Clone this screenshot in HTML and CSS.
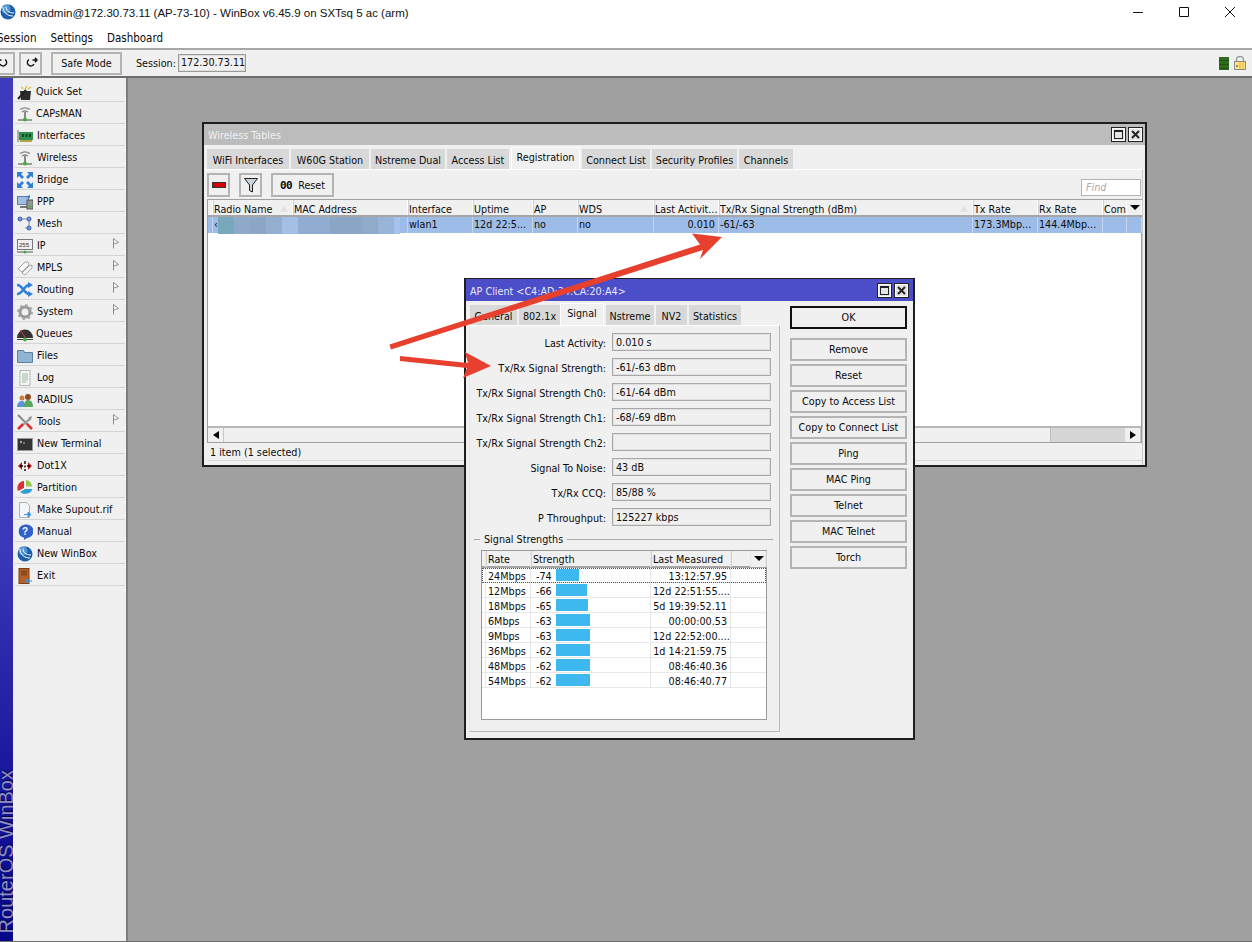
FILE: index.html
```html
<!DOCTYPE html>
<html lang="en">
<head>
<meta charset="utf-8">
<title>WinBox</title>
<link rel="stylesheet" href="styles.css">
</head>
<body>
<svg class="defs" width="0" height="0" aria-hidden="true">
  <defs>
    <symbol id="globe" viewBox="0 0 16 16"><circle cx="8" cy="8" r="7.5" fill="#1d5fa8"/><circle cx="6" cy="5" r="4.5" fill="#4f94d6"/><path d="M3 3c0 5 4 9 10 9M6 2.500c0 4 3 6.500 8 6.500" fill="none" stroke="#fff" stroke-width="1"/></symbol>
    <symbol id="antenna" viewBox="0 0 16 16"><path d="M3 3.500c3-2 7-2 10 0M5 6c2-1.300 4-1.300 6 0" fill="none" stroke="#8a8a8a" stroke-width="1.300"/><path d="M8 6v7" stroke="#666" stroke-width="1.500"/><path d="M1 14h14" stroke="#444" stroke-width="1"/><circle cx="8" cy="13.500" r="2" fill="#3fae3f"/></symbol>
    <symbol id="sub" viewBox="0 0 6 11"><path d="M.5 .5v10M.5 .5l5 4-5 1.500" fill="#fff" stroke="#8c8c8c" stroke-width="1"/></symbol>
    <symbol id="xmark" viewBox="0 0 9 9"><path d="M1 1l7 7M8 1l-7 7" stroke="#222" stroke-width="2"/></symbol>
  </defs>
</svg>

<header class="titlebar">
  <svg class="app-icon"><use href="#globe"/></svg>
  <span class="title-text">msvadmin@172.30.73.11 (AP-73-10) - WinBox v6.45.9 on SXTsq 5 ac (arm)</span>
  <div class="win-controls">
    <svg class="wc" viewBox="0 0 46 20"><path d="M18 10.500h10" stroke="#111"/></svg>
    <svg class="wc" viewBox="0 0 46 20"><path d="M18.500 5.500h9v9h-9z" fill="none" stroke="#111"/></svg>
    <svg class="wc" viewBox="0 0 46 20"><path d="M18 5l10 10M28 5l-10 10" stroke="#111"/></svg>
  </div>
</header>

<nav class="menubar">
  <span class="mb-session">Session</span><span class="mb-settings">Settings</span><span>Dashboard</span>
</nav>

<div class="toolbar">
  <button class="tb-btn tb-undo"><svg viewBox="0 0 14 12" width="14" height="12"><path d="M9 2.500a3.500 3.500 0 1 1-5 4.500M1.500 3h4M3 .8L1 3l2 2.200" fill="none" stroke="#111" stroke-width="1.400"/></svg></button>
  <button class="tb-btn tb-redo"><svg viewBox="0 0 14 12" width="14" height="12"><path d="M5 2.500a3.500 3.500 0 1 0 5 4.500M8.500 3h4M11 .8L13 3l-2 2.200" fill="none" stroke="#111" stroke-width="1.400"/></svg></button>
  <button class="tb-btn tb-safe">Safe Mode</button>
  <span class="tb-label">Session:</span>
  <span class="tb-session">172.30.73.11</span>
  <span class="tb-space"></span>
  <span class="tb-green"></span>
  <svg class="tb-lock" viewBox="0 0 12 14"><path d="M2.500 6V3.500a3.500 3 0 0 1 7 0V6" fill="none" stroke="#999" stroke-width="1.300"/><rect x=".5" y="5.500" width="11" height="8" fill="#ffe680" stroke="#8a8a8a"/><path d="M6 6v7M9 6v7" stroke="#f2b84a" stroke-width="1.500"/><path d="M3 9v2" stroke="#333"/></svg>
</div>

<main class="main">
  <aside class="sidebar">
    <div class="brand"><span class="brand-text">RouterOS WinBox</span></div>
    <ul class="menu">
      <li><svg class="mi" viewBox="0 0 16 16"><path d="M3 7h11l-1 9H4z" fill="#2b2b2b"/><path d="M1 15L9 6" stroke="#222" stroke-width="2"/><path d="M8 5l2-3M11 5l3-2M5 3l1 2" stroke="#d9b93a" stroke-width="1.300"/></svg><span class="tight">Quick Set</span></li>
      <li><svg class="mi"><use href="#antenna"/></svg><span class="tight">CAPsMAN</span></li>
      <li><svg class="mi" viewBox="0 0 16 16"><path d="M1 2v12" stroke="#999" stroke-width="1.500"/><rect x="2" y="4" width="14" height="8" fill="#2f8f4f"/><path d="M3 12v2h12v-2" fill="#b5a24a"/><path d="M5 6h2v3H5zM8.500 6h2v3h-2zM12 6h2v3h-2z" fill="#0d4a22"/></svg><span>Interfaces</span></li>
      <li><svg class="mi"><use href="#antenna"/></svg><span>Wireless</span></li>
      <li><svg class="mi" viewBox="0 0 16 16"><g fill="#2f7fd6"><path d="M0 0h6l-2 2 3 3-2 2-3-3-2 2z"/><path d="M16 0v6l-2-2-3 3-2-2 3-3-2-2z"/><path d="M0 16v-6l2 2 3-3 2 2-3 3 2 2z"/><path d="M16 16h-6l2-2-3-3 2-2 3 3 2-2z"/></g></svg><span>Bridge</span></li>
      <li><svg class="mi" viewBox="0 0 16 16"><rect x=".5" y="2.500" width="11" height="8" fill="#9fc0e6" stroke="#6b7f96"/><path d="M3 13h7" stroke="#777" stroke-width="2"/><rect x="10" y="6" width="6" height="9" fill="#8d9a8d" stroke="#555"/><circle cx="13" cy="12.500" r="1" fill="#3fae3f"/><path d="M8 3l5-2v3z" fill="#2f7fd6"/></svg><span>PPP</span></li>
      <li><svg class="mi" viewBox="0 0 16 16"><path d="M3 3h6M12 3v9M9 3h3M8 12h4" stroke="#7d8794"/><g fill="#6f97e6" stroke="#3b5cb0"><circle cx="3" cy="3" r="2"/><circle cx="12" cy="3" r="2"/><circle cx="12" cy="12" r="2"/></g></svg><span>Mesh</span></li>
      <li class="has-sub"><svg class="mi" viewBox="0 0 16 16"><rect x=".5" y="1.500" width="15" height="10" fill="#eee" stroke="#777"/><text class="mi-255" x="2" y="9">255</text><path d="M0 14h16" stroke="#555"/><circle cx="8" cy="14" r="1.500" fill="#3fae3f"/></svg><span>IP</span><svg class="sub"><use href="#sub"/></svg></li>
      <li class="has-sub"><svg class="mi" viewBox="0 0 16 16"><path d="M1 9l7-7h3l1 3-7 7zM5 13l7-7 3-1v3l-7 7z" fill="#f7f7f7" stroke="#a5a5a5"/></svg><span>MPLS</span><svg class="sub"><use href="#sub"/></svg></li>
      <li class="has-sub"><svg class="mi" viewBox="0 0 16 16"><path d="M0 3c6 0 7 9 12 9M0 12c6 0 7-9 12-9" fill="none" stroke="#2f7fd6" stroke-width="2.500"/><path d="M11 0l5 3-5 3zM11 9l5 3-5 3z" fill="#2f7fd6"/></svg><span>Routing</span><svg class="sub"><use href="#sub"/></svg></li>
      <li class="has-sub"><svg class="mi" viewBox="0 0 16 16"><circle cx="8" cy="8" r="5" fill="none" stroke="#999" stroke-width="3"/><circle cx="8" cy="8" r="7" fill="none" stroke="#aaa" stroke-width="2" stroke-dasharray="2.500 3"/></svg><span>System</span><svg class="sub"><use href="#sub"/></svg></li>
      <li><svg class="mi" viewBox="0 0 16 16"><path d="M0 12a8 8.500 0 1 1 16 0z" fill="#333"/><path d="M3 4l6 8" stroke="#e33" stroke-width="1"/><path d="M0 13.500h16" stroke="#444"/><circle cx="8" cy="13.500" r="2" fill="#3fae3f"/></svg><span class="tight">Queues</span></li>
      <li><svg class="mi" viewBox="0 0 16 16"><path d="M.5 2.500h6l1 2h8v10H.5z" fill="#8fb4d4" stroke="#5f8199"/></svg><span>Files</span></li>
      <li><svg class="mi" viewBox="0 0 16 16"><path d="M3 .5h10v15H3z" fill="#f4f4f0" stroke="#aaa" stroke-dasharray="2 .5"/><path d="M5 4h6M5 6h6M5 8h6M5 10h6M5 12h4" stroke="#9bbfa5"/></svg><span>Log</span></li>
      <li><svg class="mi" viewBox="0 0 16 16"><circle cx="5" cy="6" r="2.500" fill="#c9803a"/><circle cx="11" cy="5" r="3" fill="#8c4a26"/><path d="M0 15c0-5 3-6 5-6s3 1 3 6z" fill="#5c93d6"/><path d="M7 15c0-6 2-7 4-7s5 1 5 7z" fill="#58a85e"/></svg><span>RADIUS</span></li>
      <li class="has-sub"><svg class="mi" viewBox="0 0 16 16"><path d="M1 1l13 13" stroke="#888" stroke-width="2"/><path d="M15 2l-3 1-1 2L2 13l1 2 9-8 2-1z" fill="#999"/><path d="M1 15l5-5M10 10l5 5" stroke="#d33" stroke-width="2.500"/></svg><span>Tools</span><svg class="sub"><use href="#sub"/></svg></li>
      <li><svg class="mi" viewBox="0 0 16 16"><rect x=".5" y="2.500" width="15" height="12" fill="#333" stroke="#999"/><path d="M3 5l2 1-2 1M6 7h2" stroke="#ddd" stroke-width=".8" fill="none"/></svg><span>New Terminal</span></li>
      <li><svg class="mi" viewBox="0 0 16 16"><path d="M1 8l4-4v8zM15 8l-4-4v8z" fill="#c81e1e"/><path d="M3 8h3M10 8h3" stroke="#000" stroke-width="1.500"/><path d="M8 3v3M8 7.500v2M8 11v2" stroke="#111" stroke-width="1.500"/></svg><span>Dot1X</span></li>
      <li><svg class="mi" viewBox="0 0 16 16"><path d="M7 1a7 7 0 0 0-6 10l6-3z" fill="#d6323a"/><path d="M9 0a7 7 0 0 1 6 6.500H9z" fill="#9ac94a"/><path d="M3 12l5-3h7.500a7.500 6.500 0 0 1-12.500 3z" fill="#2f9fd0"/></svg><span>Partition</span></li>
      <li><svg class="mi" viewBox="0 0 16 16"><path d="M2.500 .5h7l3 3V15.500h-10z" fill="#f2f7fb" stroke="#a8b4bd"/><path d="M7 12.500h6M11 10l3 2.500-3 2.500z" fill="#3b8fe0" stroke="#3b8fe0"/></svg><span>Make Supout.rif</span></li>
      <li><svg class="mi" viewBox="0 0 16 16"><path d="M8 .5a7.500 6.800 0 0 1 2 13.500l-3 2v-2.300A7.500 6.800 0 0 1 8 .5z" fill="#3060c8"/><text class="mi-q" x="5" y="11">?</text></svg><span>Manual</span></li>
      <li><svg class="mi"><use href="#globe"/></svg><span>New WinBox</span></li>
      <li><svg class="mi" viewBox="0 0 16 16"><rect x="2" y=".5" width="10" height="15" fill="#b5612a" stroke="#7a4018"/><rect x="4" y="2.500" width="6" height="5" fill="#8f4a1c"/><path d="M8 13h7M11 11l-3 2 3 2z" stroke="#3b8fe0" fill="#3b8fe0"/></svg><span>Exit</span></li>
    </ul>
  </aside>

  <section class="desktop">
    <div class="win win-tables">
      <div class="win-title win-title-idle">
        <span class="win-name">Wireless Tables</span>
        <span class="tbtns"><span class="tbtn"><i class="ico-max"></i></span><span class="tbtn"><svg class="ico-x"><use href="#xmark"/></svg></span></span>
      </div>
      <div class="tabs tabs-w">
        <span class="tab">WiFi Interfaces</span><span class="tab">W60G Station</span><span class="tab">Nstreme Dual</span><span class="tab">Access List</span><span class="tab tab-on">Registration</span><span class="tab">Connect List</span><span class="tab">Security Profiles</span><span class="tab">Channels</span>
      </div>
      <div class="w-panel">
        <div class="w-tools">
          <button class="tool tool-sq"><i class="ico-minus"></i></button>
          <button class="tool tool-sq"><svg viewBox="0 0 14 16" width="14" height="16"><path d="M.5 1.500h13L8.500 8v7l-3-1.500V8z" fill="#c9d4dc" stroke="#222"/></svg></button>
          <button class="tool tool-reset"><b class="oo">00</b>Reset</button>
          <span class="find">Find</span>
        </div>
        <div class="grid grid-w">
          <div class="g-row g-head cols-w">
            <span></span><span class="sort">Radio Name</span><span>MAC Address</span><span>Interface</span><span>Uptime</span><span>AP</span><span>WDS</span><span>Last Activit...</span><span class="sort">Tx/Rx Signal Strength (dBm)</span><span>Tx Rate</span><span>Rx Rate</span><span>Com</span><span class="drop"></span>
          </div>
          <div class="g-row g-sel cols-w">
            <span></span><span>‹</span><span></span><span>wlan1</span><span>12d 22:5...</span><span>no</span><span>no</span><span class="r">0.010</span><span>-61/-63</span><span>173.3Mbp...</span><span>144.4Mbp...</span><span></span><span></span>
            <i class="mosaic"></i>
          </div>
          <div class="g-fill"></div>
          <div class="hscroll">
            <span class="sb-btn"><i class="tri-l"></i></span><span class="sb-track"></span><span class="sb-thumb"></span><span class="sb-btn"><i class="tri-r"></i></span>
          </div>
        </div>
        <div class="status">1 item (1 selected)</div>
      </div>
    </div>

    <div class="win win-client">
      <div class="win-title win-title-on">
        <span class="win-name">AP Client &lt;C4:AD:34:CA:20:A4&gt;</span>
        <span class="tbtns"><span class="tbtn"><i class="ico-max"></i></span><span class="tbtn"><svg class="ico-x"><use href="#xmark"/></svg></span></span>
      </div>
      <div class="client-body">
        <div class="client-left">
          <div class="tabs tabs-c">
            <span class="tab">General</span><span class="tab">802.1x</span><span class="tab tab-on">Signal</span><span class="tab">Nstreme</span><span class="tab">NV2</span><span class="tab">Statistics</span>
          </div>
          <div class="c-panel">
            <div class="form">
              <label>Last Activity:</label><span class="field">0.010 s</span>
              <label>Tx/Rx Signal Strength:</label><span class="field">-61/-63 dBm</span>
              <label>Tx/Rx Signal Strength Ch0:</label><span class="field">-61/-64 dBm</span>
              <label>Tx/Rx Signal Strength Ch1:</label><span class="field">-68/-69 dBm</span>
              <label>Tx/Rx Signal Strength Ch2:</label><span class="field"></span>
              <label>Signal To Noise:</label><span class="field">43 dB</span>
              <label>Tx/Rx CCQ:</label><span class="field">85/88 %</span>
              <label>P Throughput:</label><span class="field">125227 kbps</span>
            </div>
            <div class="legend"><span>Signal Strengths</span></div>
            <div class="grid grid-c">
              <div class="g-row g-head cols-c"><span></span><span>Rate</span><span>Strength</span><span>Last Measured</span><span></span><span class="drop"></span></div>
              <div class="g-row cols-c g-focus"><span></span><span>24Mbps</span><span class="str">-74<i class="bar b23"></i></span><span class="r">13:12:57.95</span><span></span><span></span></div>
              <div class="g-row cols-c"><span></span><span>12Mbps</span><span class="str">-66<i class="bar b31"></i></span><span class="r">12d 22:51:55....</span><span></span><span></span></div>
              <div class="g-row cols-c"><span></span><span>18Mbps</span><span class="str">-65<i class="bar b32"></i></span><span class="r">5d 19:39:52.11</span><span></span><span></span></div>
              <div class="g-row cols-c"><span></span><span>6Mbps</span><span class="str">-63<i class="bar b34"></i></span><span class="r">00:00:00.53</span><span></span><span></span></div>
              <div class="g-row cols-c"><span></span><span>9Mbps</span><span class="str">-63<i class="bar b34"></i></span><span class="r">12d 22:52:00....</span><span></span><span></span></div>
              <div class="g-row cols-c"><span></span><span>36Mbps</span><span class="str">-62<i class="bar b34"></i></span><span class="r">1d 14:21:59.75</span><span></span><span></span></div>
              <div class="g-row cols-c"><span></span><span>48Mbps</span><span class="str">-62<i class="bar b34"></i></span><span class="r">08:46:40.36</span><span></span><span></span></div>
              <div class="g-row cols-c"><span></span><span>54Mbps</span><span class="str">-62<i class="bar b34"></i></span><span class="r">08:46:40.77</span><span></span><span></span></div>
            </div>
          </div>
        </div>
        <div class="actions">
          <button class="act act-ok">OK</button>
          <button class="act">Remove</button>
          <button class="act">Reset</button>
          <button class="act">Copy to Access List</button>
          <button class="act">Copy to Connect List</button>
          <button class="act">Ping</button>
          <button class="act">MAC Ping</button>
          <button class="act">Telnet</button>
          <button class="act">MAC Telnet</button>
          <button class="act">Torch</button>
        </div>
      </div>
    </div>
  </section>
</main>
<div class="foot"></div>

<svg class="arrows" viewBox="0 0 1252 942" aria-hidden="true">
  <path d="M389.500 344.500L700 244.500L692 233.500L722 237L700 259L703 250L391 349.500z" fill="#e8402f"/>
  <path d="M400 356L468 363L465 352L491 366L463 378L467 368L400 361z" fill="#e8402f"/>
</svg>
</body>
</html>
```
FILE: styles.css
```css
* { box-sizing: border-box; }
html, body { margin: 0; padding: 0; }
body {
  width: 1252px; height: 942px; overflow: hidden; position: relative;
  display: flex; flex-direction: column; background: #fff; color: #0c0c0c;
  font: 10.700px "DejaVu Sans Condensed", "Liberation Sans", sans-serif;
}
.defs { position: absolute; }
button { font: inherit; color: inherit; margin: 0; padding: 0; }

.titlebar { height: 28px; flex: none; display: flex; align-items: center; background: #fff; font: 11.500px "Liberation Sans", sans-serif; color: #111; position: relative; }
.app-icon { width: 16px; height: 16px; margin: -4px 4px 0 0; flex: none; }
.title-text { margin-top: -3px; white-space: nowrap; }
.win-controls { margin-left: auto; display: flex; margin-right: -1px; margin-top: -5px; }
.wc { width: 46px; height: 20px; }

.menubar { height: 20px; flex: none; display: flex; align-items: center; background: #fff; margin-left: -3px; gap: 14px; font-size: 11.500px; }
.menubar span { white-space: nowrap; }

.toolbar { height: 30px; flex: none; display: flex; align-items: center; background: #f0f0f0; border-top: 2px solid #a8a8a8; border-bottom: 2px solid #6e6e6e; }
.tb-btn { height: 23px; background: #f0f0f0; border: 2px solid #b4b4b4; display: flex; align-items: center; justify-content: center; }
.tb-undo { width: 24px; margin-left: -9px; }
.tb-redo { width: 23px; margin-left: 4px; }
.tb-safe { width: 71px; margin-left: 9px; }
.tb-label { margin-left: 14px; }
.tb-session { width: 68px; height: 18px; margin-left: 2px; border: 1px solid #9a9a9a; background: #f0f0f0; line-height: 16px; padding-left: 2px; box-shadow: inset 0 0 0 1px #ddd; white-space: nowrap; }
.tb-space { flex: 1; }
.tb-green { width: 10px; height: 13px; background: repeating-linear-gradient(#2f6b1c 0 3px, #1f5212 3px 4px); }
.tb-lock { width: 12px; height: 14px; margin: 0 6px 0 5px; }

.main { flex: 1; display: flex; min-height: 0; }
.sidebar { width: 128px; flex: none; display: flex; background: #f0f0f0; border-right: 2px solid #7d7d7d; }
.brand { width: 13px; flex: none; position: relative; overflow: hidden; background: linear-gradient(#3d3bbd 0, #3a38b8 55%, #1a189c 80%, #07078a 100%); }
.brand-text { position: absolute; left: -5px; bottom: 8px; writing-mode: vertical-rl; transform: rotate(180deg); font: 20px "Liberation Sans", sans-serif; color: #8f8fc2; white-space: nowrap; text-shadow: 1px 0 1px #000040; }
.menu { list-style: none; margin: 0 0 0 2px; padding: 2px 0 0; width: 110px; }
.menu li { height: 22px; display: flex; align-items: center; padding: 2px 0 0 2px; gap: 4px; border-bottom: 1px solid #d4d4d4; position: relative; white-space: nowrap; }
.menu .tight { margin-left: -1px; }
.mi { width: 16px; height: 16px; flex: none; }
.mi-255 { font: 6px "Liberation Sans", sans-serif; fill: #333; }
.mi-q { font: bold 10px "Liberation Sans", sans-serif; fill: #fff; }
.sub { position: absolute; left: 98px; top: 4px; width: 6px; height: 11px; }

.desktop { flex: 1; position: relative; background: #a0a0a0; }
.win { position: absolute; border: 2px solid #1e1e1e; background: #f0f0f0; display: flex; flex-direction: column; }
.win-tables { left: 74px; top: 44px; width: 945px; height: 345px; }
.win-client { left: 336px; top: 200px; width: 451px; height: 462px; border-width: 1px 2px 2px; }
.win-title { flex: none; height: 21px; display: flex; align-items: center; justify-content: space-between; padding: 0 2px 0 4px; }
.win-name { padding-top: 2px; }
.win-title-idle { background: #bcbcbc; color: #f0f0f0; }
.win-title-on { background: #4c4dc8; color: #e8e8f4; height: 22px; padding-right: 4px; }
.tbtns { display: flex; gap: 2px; }
.tbtn { width: 15px; height: 15px; border: 1px solid #222; background: #e4e4e4; display: flex; align-items: center; justify-content: center; box-shadow: inset 0 0 0 1px #fff; }
.ico-max { width: 9px; height: 9px; border: 1px solid #222; border-top-width: 2px; }
.ico-x { width: 9px; height: 9px; }

.tabs { display: grid; gap: 2px; align-items: end; flex: none; }
.tab { height: 20px; background: #d8d8d8; display: flex; align-items: center; justify-content: center; white-space: nowrap; padding-top: 2px; }
.tab-on { height: 22px; background: #f0f0f0; border: 1px solid #fff; border-bottom: 0; padding: 0 0 2px; }
.tabs-w { grid-template-columns: 82px 78px 74px 62px 69px 68px 85px 54px; height: 24px; padding-left: 3px; }
.tabs-c { grid-template-columns: 47px 41px 42px 48px 31px 52px; height: 24px; padding-left: 4px; }
.tabs-c .tab-on { margin-left: -2px; }

.w-panel { flex: 1; min-height: 0; margin-right: 2px; border-top: 1px solid #fff; border-right: 1px solid #c8c8c8; padding: 3px 0 0 3px; display: flex; flex-direction: column; }
.w-tools { height: 24px; flex: none; display: flex; position: relative; }
.tool { height: 24px; border: 2px solid #b4b4b4; background: #f0f0f0; display: flex; align-items: center; justify-content: center; }
.tool-sq { width: 23px; margin-right: 9px; }
.tool-reset { width: 63px; gap: 6px; }
.oo { font: bold 11px "DejaVu Sans Mono", monospace; letter-spacing: -.5px; }
.ico-minus { width: 12px; height: 4px; background: #d80000; box-shadow: 0 0 0 1px #333; }
.find { position: absolute; left: 874px; top: 6px; width: 60px; height: 17px; background: #fff; border: 1px solid #b4b4b4; color: #aaa; font-style: italic; padding-left: 4px; line-height: 15px; }

.grid { border: 1px solid #a0a0a0; background: #fff; display: flex; flex-direction: column; }
.grid-w { height: 244px; margin-top: 2px; flex: none; }
.g-row { display: grid; flex: none; height: 15px; position: relative; }
.g-row > span { white-space: nowrap; overflow: hidden; padding-left: 1px; line-height: 14px; border-right: 1px solid #e3e3e3; }
.g-head { height: 17px; background: #f0f0f0; border-bottom: 2px solid #a6a6a6; }
.g-head > span { border-right: 1px solid #fff; line-height: 15px; padding-top: 2px; box-shadow: 1px 0 0 #d0d0d0; position: relative; }
.g-row > .r { text-align: right; padding-right: 3px; }
.cols-w { grid-template-columns: 5px 80px 115px 65px 60px 45px 76px 65px 254px 65px 65px 24px 15px; }
.cols-c { grid-template-columns: 4px 45px 120px 80px 20px 15px; }
.g-sel { height: 16px; background: #9dbde8; }
.g-sel > span { border-right-color: #c4d6ee; line-height: 16px; }
.sort::after { content: ""; position: absolute; right: 4px; top: 6px; border: 4px solid transparent; border-top: 0; border-bottom: 6px solid #e2e2e2; }
.drop { background: #f0f0f0; }
.drop::after { content: ""; position: absolute; left: 3px; top: 5px; border: 5px solid transparent; border-bottom: 0; border-top: 5px solid #000; }
.mosaic { position: absolute; left: 10px; top: 0; width: 182px; height: 17px; background: linear-gradient(90deg, #78a8bb 0 16px, #8fa9c8 16px 32px, #8ea6c6 32px 48px, #94aecf 48px 64px, #a3bfe6 64px 80px, #90acd0 80px 112px, #8ba5c4 112px 144px, #90abca 144px 160px, #98b4d8 160px 176px, #a5c3ec 176px); }
.g-fill { flex: 1; }
.hscroll { height: 16px; flex: none; display: flex; border-top: 2px solid #b8b8b8; background: #f0f0f0; }
.sb-btn { width: 16px; flex: none; display: flex; align-items: center; justify-content: center; border-right: 1px solid #c8c8c8; background: #f0f0f0; }
.sb-track { flex: 1; }
.sb-thumb { width: 75px; background: #d6d6d6; border-left: 1px solid #bdbdbd; }
.tri-l, .tri-r { width: 0; height: 0; border: 4px solid transparent; }
.tri-l { border-left: 0; border-right: 6px solid #000; }
.tri-r { border-right: 0; border-left: 6px solid #000; }
.status { height: 18px; flex: none; padding-left: 3px; line-height: 19px; border-bottom: 1px solid #d8d8d8; }

.client-body { flex: 1; min-height: 0; display: flex; }
.client-left { width: 314px; flex: none; display: flex; flex-direction: column; }
.c-panel { flex: 1; margin: 0 0 6px 3px; border-top: 1px solid #fff; border-right: 1px solid #b8b8b8; border-bottom: 1px solid #b8b8b8; border-left: 1px solid #e6e6e6; padding-top: 7px; }
.form { display: grid; grid-template-columns: 136px 159px; column-gap: 6px; row-gap: 7px; align-items: center; }
.form label { text-align: right; white-space: nowrap; padding-top: 2px; }
.field { height: 18px; border: 1px solid #a8a8a8; background: #f0f0f0; line-height: 18px; padding-left: 3px; box-shadow: inset 0 0 0 1px #e0e0e0; }
.legend { margin: 6px 6px 0 4px; height: 14px; display: flex; align-items: center; gap: 4px; }
.legend::before { content: ""; width: 6px; height: 1px; background: #a8a8a8; }
.legend::after { content: ""; flex: 1; height: 1px; background: #a8a8a8; }
.grid-c { margin: 4px 0 0 11px; width: 286px; height: 170px; border-color: #9a9a9a; }
.grid-c .g-row > span { border-right-color: #e8e8e8; padding-left: 2px; line-height: 18px; }
.grid-c .g-head > span { line-height: 14px; overflow: visible; }
.grid-c .g-row:not(.g-head) { border-bottom: 1px solid #e8e8e8; }
.grid-c .g-row:not(.g-head) > span:nth-child(n+5) { border-right: 0; }
.g-focus { outline: 1px dotted #555; outline-offset: -1px; }
.grid-c .g-row > .str { display: flex; position: relative; padding-left: 5px; }
.bar { position: absolute; left: 25px; top: 1px; height: 12px; background: #3db9ef; }
.b23 { width: 23px; } .b31 { width: 31px; } .b32 { width: 32px; } .b34 { width: 34px; }

.actions { display: flex; flex-direction: column; gap: 3px; margin: 5px 0 0 10px; width: 117px; }
.act { height: 23px; width: 117px; border: 2px solid #b4b4b4; background: #f0f0f0; flex: none; white-space: nowrap; }
.act-ok { border: 2px solid #111; margin-bottom: 6px; }

.foot { height: 1px; flex: none; background: #6e6e6e; }
.arrows { position: absolute; left: 0; top: 0; width: 1252px; height: 942px; pointer-events: none; }
```
